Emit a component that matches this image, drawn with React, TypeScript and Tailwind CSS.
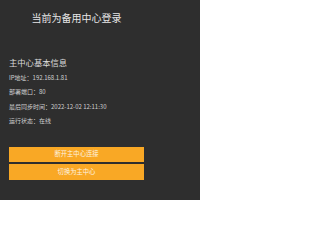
import React from "react";

export default function App() {
  const rows = [
    "IP地址：192.168.1.81",
    "部署端口：80",
    "最后同步时间：2022-12-02 12:11:30",
    "运行状态：在线",
  ];
  return (
    <div className="w-[200px] h-[200px] bg-[#2e2e2e] font-['Noto_Sans_CJK_SC','Noto_Sans',sans-serif] overflow-hidden">
      <div className="w-[153px] pt-[12px] text-center text-[10px] leading-[12px] text-[#e6e6e6]">
        当前为备用中心登录
      </div>
      <div className="pl-[9px] w-[144px]">
        <div className="mt-[33px] text-[8.3px] leading-[10px] text-[#dcdcdc]">主中心基本信息</div>
        <div className="mt-[7px] flex flex-col gap-[7px] text-[6px] leading-[7.4px] text-[#d0d0d0]">
          {rows.map((r) => (
            <div key={r}>{r}</div>
          ))}
        </div>
        <div className="mt-[22px] flex flex-col gap-[2px]">
          <button className="h-[15.5px] w-full bg-[#f9a825] text-[6.3px] text-[#fdf3e0] leading-none">
            断开主中心连接
          </button>
          <button className="h-[15.5px] w-full bg-[#f9a825] text-[6.3px] text-[#fdf3e0] leading-none">
            切换为主中心
          </button>
        </div>
      </div>
    </div>
  );
}
